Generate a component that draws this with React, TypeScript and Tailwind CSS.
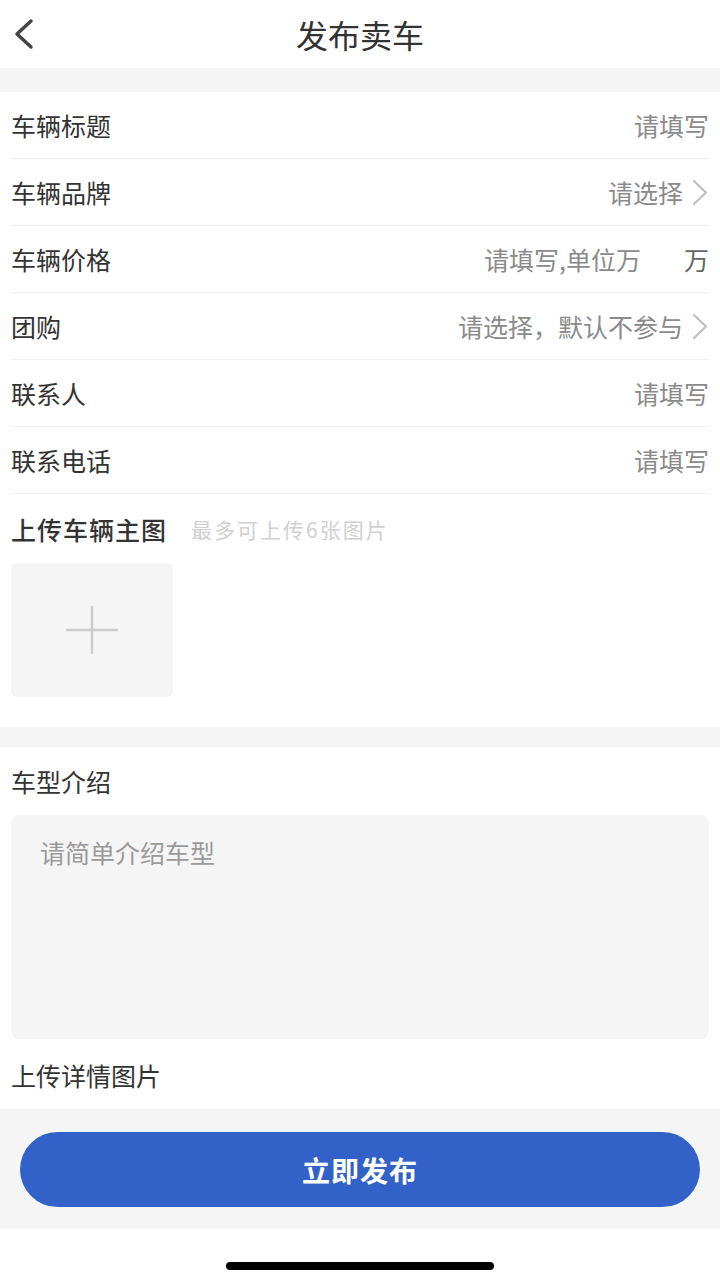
import { useState } from 'react'

const rows = [
  { label: '车辆标题', value: '请填写', arrow: false },
  { label: '车辆品牌', value: '请选择', arrow: true },
  { label: '车辆价格', value: '请填写,单位万', unit: '万', arrow: false },
  { label: '团购', value: '请选择，默认不参与', arrow: true },
  { label: '联系人', value: '请填写', arrow: false },
  { label: '联系电话', value: '请填写', arrow: false }
]

function ChevronRight() {
  return (
    <svg width="18" height="27" viewBox="0 0 18 27" fill="none" className="ml-[8px] shrink-0">
      <path d="M3 2 L15 13.5 L3 25" stroke="#bdbdbd" strokeWidth="2" strokeLinecap="round" strokeLinejoin="round" />
    </svg>
  )
}

export default function App() {
  const [intro, setIntro] = useState('')

  return (
    <div
      className="flex flex-col w-[720px] h-[1280px] bg-white text-[#333]"
      style={{ fontFamily: '"Noto Sans CJK SC", "Noto Sans", sans-serif' }}
    >
      {/* Header */}
      <div className="flex h-[68px] items-center shrink-0">
        <div className="w-[80px] pl-[12px] flex items-center">
          <svg width="24" height="32" viewBox="0 0 24 32" fill="none">
            <path d="M19 3 L5 16 L19 29" stroke="#444" strokeWidth="3.5" strokeLinecap="round" strokeLinejoin="round" />
          </svg>
        </div>
        <h1 className="flex-1 text-center text-[32px] font-normal leading-none text-[#333]">发布卖车</h1>
        <div className="w-[80px]" />
      </div>

      <div className="h-[24px] bg-[#f5f5f5] shrink-0" />

      {/* Fields */}
      <div className="px-[11px]">
        {rows.map((row) => (
          <div
            key={row.label}
            className="flex h-[67px] items-center justify-between border-b border-[#efefef]"
          >
            <span className="text-[25px] leading-none text-[#333]">{row.label}</span>
            <div className="flex items-center text-[25px] leading-none text-[#8a8a8a]">
              <span>{row.value}</span>
              {row.unit && <span className="ml-[43px] text-[#666]">{row.unit}</span>}
              {row.arrow && <ChevronRight />}
            </div>
          </div>
        ))}

        {/* Main pictures */}
        <div className="flex items-center pt-[22px] h-[48px]">
          <span className="text-[25px] leading-[26px] tracking-[1px] font-medium text-[#333]">上传车辆主图</span>
          <span className="ml-[24px] text-[21px] leading-none tracking-[2px] text-[#d0d0d0]">最多可上传6张图片</span>
        </div>
        <div className="mt-[21px] mb-[30px] w-[162px] h-[134px] rounded-[6px] bg-[#f5f5f5] flex items-center justify-center">
          <svg width="56" height="56" viewBox="0 0 56 56" fill="none">
            <path d="M28 4 V52 M2 28 H54" stroke="#cccccc" strokeWidth="2.5" />
          </svg>
        </div>
      </div>

      <div className="h-[20px] bg-[#f5f5f5] shrink-0" />

      {/* Intro */}
      <div className="px-[11px]">
        <div className="pt-[21px] text-[25px] leading-[26px] text-[#333]">车型介绍</div>
        <textarea
          value={intro}
          onChange={(e) => setIntro(e.target.value)}
          placeholder="请简单介绍车型"
          className="mt-[21px] block w-full h-[224px] resize-none rounded-[8px] bg-[#f5f5f5] px-[29px] pt-[24px] text-[25px] leading-[26px] outline-none placeholder:text-[#9a9a9a]"
        />
        <div className="pt-[23px] pb-[21px] text-[25px] leading-[26px] text-[#333]">上传详情图片</div>
      </div>

      {/* Submit */}
      <div className="h-[120px] bg-[#f5f5f5] px-[20px] pt-[23px] shrink-0">
        <button className="w-full h-[75px] rounded-full bg-[#3262c8] text-white text-[28px] font-bold tracking-[1px]">
          立即发布
        </button>
      </div>

      {/* Home indicator */}
      <div className="flex-1 flex items-end justify-center pb-[10px]">
        <div className="w-[268px] h-[8px] rounded-full bg-black" />
      </div>
    </div>
  )
}
